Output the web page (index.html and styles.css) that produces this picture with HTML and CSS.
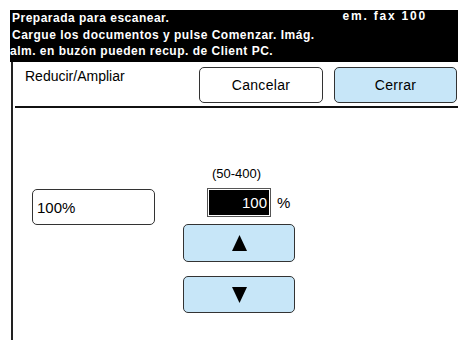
FILE: index.html
```html
<!DOCTYPE html>
<html lang="es">
<head>
<meta charset="utf-8">
<title>Reducir/Ampliar</title>
<link rel="stylesheet" href="styles.css">
</head>
<body>
<div class="screen">
  <div class="header">
    <div class="msg">
      <div class="line">Preparada para escanear.</div>
      <div class="line">Cargue los documentos y pulse Comenzar. Imág.</div>
      <div class="line l3">alm. en buzón pueden recup. de Client PC.</div>
    </div>
    <div class="mode">em. fax 100</div>
  </div>
  <div class="panel">
    <div class="titlebar">
      <div class="title">Reducir/Ampliar</div>
      <button class="btn btn-cancel">Cancelar</button>
      <button class="btn btn-close">Cerrar</button>
    </div>
    <div class="content">
      <div class="preset">100%</div>
      <div class="entry">
        <div class="range">(50-400)</div>
        <div class="readout-row">
          <div class="readout">100</div>
          <span class="unit">%</span>
        </div>
        <button class="step step-up">
          <svg width="15" height="16" viewBox="0 0 15 16"><polygon points="7.5,0 15,16 0,16" fill="#000"/></svg>
        </button>
        <button class="step step-down">
          <svg width="15" height="16" viewBox="0 0 15 16"><polygon points="0,0 15,0 7.5,16" fill="#000"/></svg>
        </button>
      </div>
    </div>
  </div>
</div>
</body>
</html>
```
FILE: styles.css
```css
html, body {
  margin: 0;
  padding: 0;
  background: #fff;
}
body {
  width: 458px;
  height: 340px;
  overflow: hidden;
  font-family: "Liberation Sans", Arial, sans-serif;
  color: #000;
}
.screen {
  padding-top: 10px;
}
.header {
  margin-left: 10px;
  height: 52px;
  background: #000;
  color: #fff;
  display: flex;
  justify-content: space-between;
  align-items: flex-start;
  padding-left: 2px;
  padding-right: 31px;
}
.msg .line {
  font-size: 12px;
  font-weight: bold;
  line-height: 16.5px;
  letter-spacing: 0.5px;
  white-space: nowrap;
}
.msg .l3 {
  margin-left: -2px;
}
.mode {
  font-size: 12px;
  font-weight: bold;
  line-height: 12px;
  letter-spacing: 1.8px;
  white-space: nowrap;
}
.panel {
  margin-left: 11px;
  border-left: 2px solid #222;
  height: 278px;
}
.titlebar {
  margin-left: 2px;
  display: flex;
  align-items: flex-start;
  padding: 5px 1px 3px 10px;
  border-bottom: 2px solid #111;
}
.title {
  flex: 1;
  font-size: 14px;
  line-height: 16px;
  padding-top: 1px;
}
.btn {
  font-family: "Liberation Sans", Arial, sans-serif;
  font-size: 14px;
  letter-spacing: 0.3px;
  color: #000;
  height: 36px;
  border: 1px solid #333;
  border-radius: 5px;
  padding: 0;
  margin: 0;
  display: flex;
  align-items: center;
  justify-content: center;
}
.btn-cancel {
  width: 124px;
  background: #fff;
  margin-right: 11px;
}
.btn-close {
  width: 123px;
  background: #c7e6f8;
}
.content {
  display: flex;
  align-items: flex-start;
  padding-top: 58px;
}
.preset {
  margin-left: 19px;
  margin-top: 23px;
  width: 123px;
  height: 36px;
  box-sizing: border-box;
  border: 1px solid #333;
  border-radius: 5px;
  font-size: 15px;
  display: flex;
  align-items: center;
  padding-left: 4px;
}
.entry {
  margin-left: 28px;
  width: 112px;
  display: flex;
  flex-direction: column;
}
.range {
  font-size: 13px;
  line-height: 16px;
  margin-left: 29px;
}
.readout-row {
  display: flex;
  align-items: center;
  margin-top: 6px;
  margin-left: 24px;
}
.readout {
  width: 64px;
  height: 29px;
  box-sizing: border-box;
  background: #000;
  color: #fff;
  border: 1px solid #555;
  box-shadow: inset 0 0 0 1px #fff;
  font-size: 15px;
  display: flex;
  align-items: center;
  justify-content: flex-end;
  padding-right: 3px;
}
.unit {
  margin-left: 6px;
  font-size: 15px;
}
.step {
  width: 112px;
  height: 38px;
  box-sizing: border-box;
  background: #c7e6f8;
  border: 1px solid #333;
  border-radius: 5px;
  padding: 0;
  margin: 0;
  display: flex;
  align-items: center;
  justify-content: center;
}
.step svg {
  display: block;
}
.step-up {
  margin-top: 7px;
}
.step-down {
  margin-top: 14px;
  height: 37px;
}
```
